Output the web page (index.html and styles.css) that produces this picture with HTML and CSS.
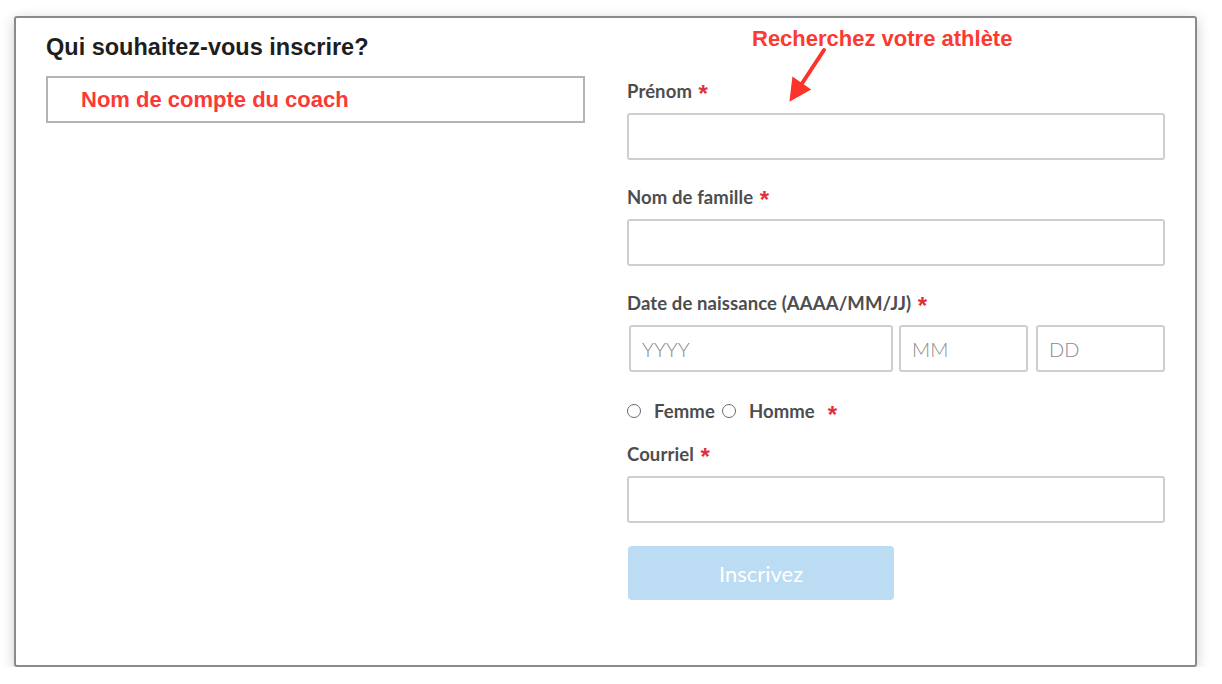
FILE: index.html
```html
<!DOCTYPE html>
<html lang="fr">
<head>
<meta charset="utf-8">
<title>Inscription</title>
<link rel="stylesheet" href="styles.css">
</head>
<body>
<div class="frame">
  <div class="left-col">
    <h2 class="title">Qui souhaitez-vous inscrire?</h2>
    <div class="coach-box">Nom de compte du coach</div>
  </div>
  <div class="right-col">
    <div class="annotation">Recherchez votre athlète</div>
    <svg class="arrow" viewBox="780 45 50 61" width="50" height="61">
      <line x1="824" y1="50" x2="801" y2="85" stroke="#fb3329" stroke-width="4" stroke-linecap="round"/>
      <polygon points="789.4,101.8 792.4,76.6 811.2,89.4" fill="#fb3329"/>
    </svg>
    <form class="form">
      <div class="field">
        <label class="label">Prénom <span class="req">*</span></label>
        <input class="input" type="text">
      </div>
      <div class="field">
        <label class="label">Nom de famille <span class="req">*</span></label>
        <input class="input" type="text">
      </div>
      <div class="field">
        <label class="label">Date de naissance (AAAA/MM/JJ) <span class="req">*</span></label>
        <div class="date-row">
          <input class="input date-y" type="text" placeholder="YYYY">
          <input class="input date-m" type="text" placeholder="MM">
          <input class="input date-d" type="text" placeholder="DD">
        </div>
      </div>
      <div class="radio-row">
        <input class="radio" type="radio" name="sexe">
        <span class="radio-label">Femme</span>
        <input class="radio" type="radio" name="sexe">
        <span class="radio-label">Homme</span>
        <span class="req req-radio">*</span>
      </div>
      <div class="field">
        <label class="label">Courriel <span class="req">*</span></label>
        <input class="input" type="text">
      </div>
      <button class="submit" type="button">Inscrivez</button>
    </form>
  </div>
</div>
</body>
</html>
```

FILE: styles.css
```css
* { box-sizing: border-box; }

html, body {
  margin: 0;
  padding: 0;
  background: #ffffff;
}

body {
  padding: 16px 0 0 14px;
  font-family: "Lato", "Liberation Sans", sans-serif;
}

.frame {
  width: 1183px;
  height: 651px;
  background: #ffffff;
  border: 2px solid #8a8a8a;
  border-radius: 3px;
  box-shadow: 0 3px 14px rgba(0, 0, 0, 0.2);
  padding: 16px 30px 0 30px;
  display: grid;
  grid-template-columns: 539px 538px;
  column-gap: 42px;
  align-items: start;
}

.title {
  margin: 0;
  font-family: "Liberation Sans", Arial, sans-serif;
  font-weight: 700;
  font-size: 23.5px;
  line-height: 27px;
  color: #1e1e1e;
}

.coach-box {
  margin-top: 15px;
  height: 47px;
  border: 2px solid #b4b4b8;
  padding-left: 33px;
  display: flex;
  align-items: center;
  font-family: "Liberation Sans", Arial, sans-serif;
  font-weight: 700;
  font-size: 22px;
  color: #f93a36;
}

.right-col {
  position: relative;
  padding-top: 46px;
}

.annotation {
  position: absolute;
  left: 125px;
  top: -6px;
  font-family: "Liberation Sans", Arial, sans-serif;
  font-weight: 700;
  font-size: 22px;
  line-height: 22px;
  color: #fb3a31;
  white-space: nowrap;
}

.arrow {
  position: absolute;
  left: 153px;
  top: 11px;
}

.form {
  display: flex;
  flex-direction: column;
}

.field {
  display: flex;
  flex-direction: column;
  margin-bottom: 26px;
}

.label {
  font-weight: 700;
  font-size: 18.5px;
  letter-spacing: 0.1px;
  line-height: 22px;
  color: #4d4d4d;
  margin-bottom: 11px;
}

.req {
  color: #e0313a;
  font-family: "Liberation Sans", Arial, sans-serif;
  font-weight: 700;
  font-size: 24px;
  line-height: 0;
  vertical-align: -4px;
  margin-left: 2px;
}

.input {
  height: 47px;
  width: 100%;
  border: 2px solid #cfcfcf;
  border-radius: 3px;
  background: #fff;
  padding: 0 11px;
  font-family: "Lato", sans-serif;
  font-size: 20px;
  color: #333;
  outline: none;
}

.input::placeholder {
  color: #8a8a8a;
  font-weight: 300;
}

.date-row {
  display: flex;
  padding: 0 2px;
  gap: 6px;
}

.date-y { width: 264px; flex: none; }
.date-m { width: 129px; flex: none; }
.date-d { width: 129px; flex: none; margin-left: 2px; }

.radio-row {
  display: flex;
  align-items: center;
  height: 22px;
  margin-top: 2px;
  margin-bottom: 21px;
  font-size: 18.5px;
  letter-spacing: 0.1px;
  font-weight: 700;
  color: #4d4d4d;
}

.radio {
  appearance: none;
  -webkit-appearance: none;
  width: 14px;
  height: 14px;
  margin: 0;
  border: 1px solid #6a6a6a;
  border-radius: 50%;
  background: #fff;
  flex: none;
}

.radio-label {
  margin-left: 13px;
  margin-right: 7px;
}

.req-radio {
  margin-left: 6px;
  line-height: 22px;
  height: 22px;
  margin-top: 8px;
}

.submit {
  margin-top: -3px;
  margin-left: 1px;
  width: 266px;
  height: 54px;
  border: none;
  border-radius: 4px;
  background: #bbdcf2;
  color: #ffffff;
  font-family: "Lato", sans-serif;
  font-size: 22px;
  font-weight: 400;
}
```
